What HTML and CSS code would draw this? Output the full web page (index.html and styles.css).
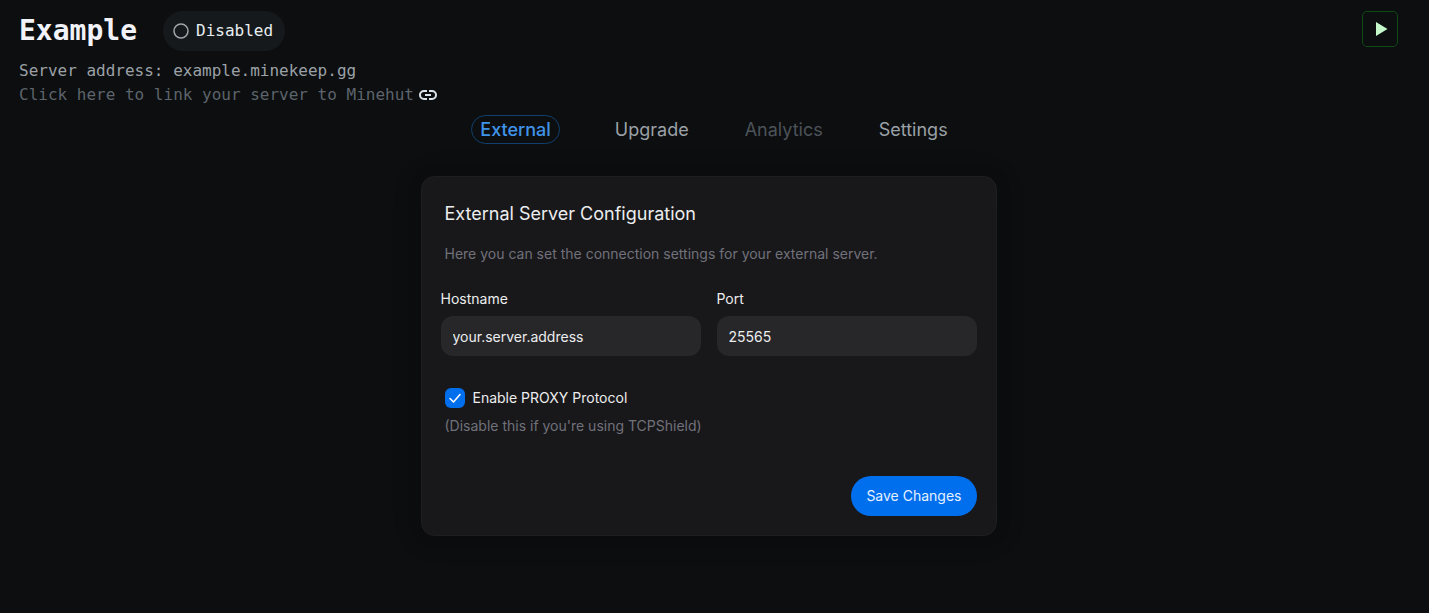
FILE: index.html
```html
<!DOCTYPE html>
<html lang="en">
<head>
<meta charset="utf-8">
<meta name="viewport" content="width=device-width, initial-scale=1">
<title>Example</title>
<link rel="stylesheet" href="styles.css">
</head>
<body>
<div class="page">
  <header class="header">
    <div class="server">
      <div class="title-row">
        <h1 class="title">Example</h1>
        <span class="status">
          <svg class="status-icon" viewBox="0 0 16 16" aria-hidden="true"><circle cx="8" cy="8" r="7"/></svg>
          Disabled
        </span>
      </div>
      <p class="address">Server address: example.minekeep.gg</p>
      <a class="minehut" href="#">Click here to link your server to Minehut
        <svg class="link-icon" viewBox="0 0 20 20" aria-hidden="true"><path d="M9 6H6a4 4 0 0 0 0 8h3M11 6h3a4 4 0 0 1 0 8h-3M7 10h6"/></svg>
      </a>
    </div>
    <button class="play" type="button" aria-label="Start server">
      <svg class="play-icon" viewBox="0 0 12 14" aria-hidden="true"><path d="M0 0v14l11.500-7z"/></svg>
    </button>
  </header>
  <nav class="tabs">
    <a class="tab active" href="#">External</a>
    <a class="tab" href="#">Upgrade</a>
    <a class="tab disabled" href="#" aria-disabled="true">Analytics</a>
    <a class="tab" href="#">Settings</a>
  </nav>
  <main>
    <form class="card">
      <h2 class="card-title">External Server Configuration</h2>
      <p class="card-text">Here you can set the connection settings for your external server.</p>
      <div class="fields">
        <div class="field">
          <label for="hostname">Hostname</label>
          <input class="input" id="hostname" type="text" value="your.server.address">
        </div>
        <div class="field">
          <label for="port">Port</label>
          <input class="input" id="port" type="text" inputmode="numeric" value="25565">
        </div>
      </div>
      <label class="check" for="proxy">
        <span class="check-wrap">
          <input class="box" id="proxy" type="checkbox" checked>
          <svg class="tick" viewBox="0 0 20 20" aria-hidden="true"><path d="M5 10.500l3.500 3.500L15 6.500"/></svg>
        </span>
        Enable PROXY Protocol
      </label>
      <p class="hint">(Disable this if you're using TCPShield)</p>
      <div class="actions"><button class="save" type="button">Save Changes</button></div>
    </form>
  </main>
</div>
</body>
</html>
```
FILE: styles.css
```css
* { box-sizing: border-box; }
body {
  margin: 0;
  background: #0c0e10;
  color: #ecedee;
  font: 14px/20px Inter, "Liberation Sans", sans-serif;
}
h1, h2, p { margin: 0; font-weight: 400; }
a { text-decoration: none; }
.page { padding: 11px 12px 0 0; }
.header {
  display: flex;
  justify-content: space-between;
  align-items: flex-start;
  padding: 0 19px;
  font: 16px/24px "DejaVu Sans Mono", "Liberation Mono", monospace;
}
.title-row { display: flex; align-items: center; gap: 26px; margin-bottom: 8px; }
.title { font-size: 28px; line-height: 36px; font-weight: 700; color: #f1f3f8; }
.status {
  display: flex;
  align-items: center;
  gap: 7px;
  height: 40px;
  padding: 0 12px 0 10px;
  border-radius: 20px;
  background: #16191c;
  color: #e8eff2;
}
.status-icon { width: 16px; height: 16px; fill: none; stroke: #a1a5a9; stroke-width: 1.5; }
.address { color: #9ba1a6; }
.minehut { display: flex; align-items: center; gap: 4px; color: #5d646b; }
.link-icon { width: 20px; height: 20px; fill: none; stroke: #dbe4ea; stroke-width: 2; }
.play {
  display: flex;
  align-items: center;
  justify-content: center;
  width: 36px;
  height: 36px;
  padding: 0 0 0 4px;
  border: 1px solid #0d4a14;
  border-radius: 5px;
  background: transparent;
}
.play-icon { width: 12px; height: 14px; fill: #c5f9cc; }
.tabs {
  display: flex;
  justify-content: center;
  gap: 38px;
  margin-top: 8px;
  padding-left: 11px;
  font-size: 18px;
  line-height: 27px;
}
.tab { padding: 0 8px; border: 1px solid transparent; border-radius: 15px; color: #9ba1a6; }
.tab.active { margin-right: 8px; color: #4094e8; border-color: #11406f; font-weight: 500; }
.tab.disabled { color: #4c5359; }
.card {
  width: 100%;
  max-width: 576px;
  margin: 32px auto;
  padding: 24px 20px 20px;
  border-radius: 14px;
  background: #18181a;
  box-shadow: inset 0 0 1px 1px #ffffff08, 0 0 15px #00000020, 0 2px 30px #00000028;
}
.card-title { padding: 0 4px; font-size: 18px; line-height: 28px; }
.card-text { padding: 0 4px; margin-top: 16px; color: #71717a; }
.fields { display: grid; grid-template-columns: 1fr 1fr; gap: 16px; margin: 25px 0 32px; }
.field { display: flex; flex-direction: column; gap: 7px; }
.input {
  width: 100%;
  height: 40px;
  padding: 0 12px;
  border: 0;
  border-radius: 12px;
  background: #27272a;
  color: #ecedee;
  font: inherit;
}
.check { display: flex; align-items: center; gap: 8px; padding: 0 4px; }
.check-wrap { display: grid; width: 20px; height: 20px; }
.box, .tick { grid-area: 1 / 1; width: 20px; height: 20px; margin: 0; }
.box { appearance: none; border-radius: 6px; background: #006fee; }
.tick { fill: none; stroke: #fff; stroke-width: 1.5; stroke-linecap: round; stroke-linejoin: round; pointer-events: none; }
.hint { margin: 8px 4px 40px; color: #71717a; }
.actions { display: flex; justify-content: flex-end; }
.save {
  height: 40px;
  padding: 0 15px;
  border: 0;
  border-radius: 20px;
  background: #006fee;
  color: #e6f1fe;
  font: inherit;
}
```
